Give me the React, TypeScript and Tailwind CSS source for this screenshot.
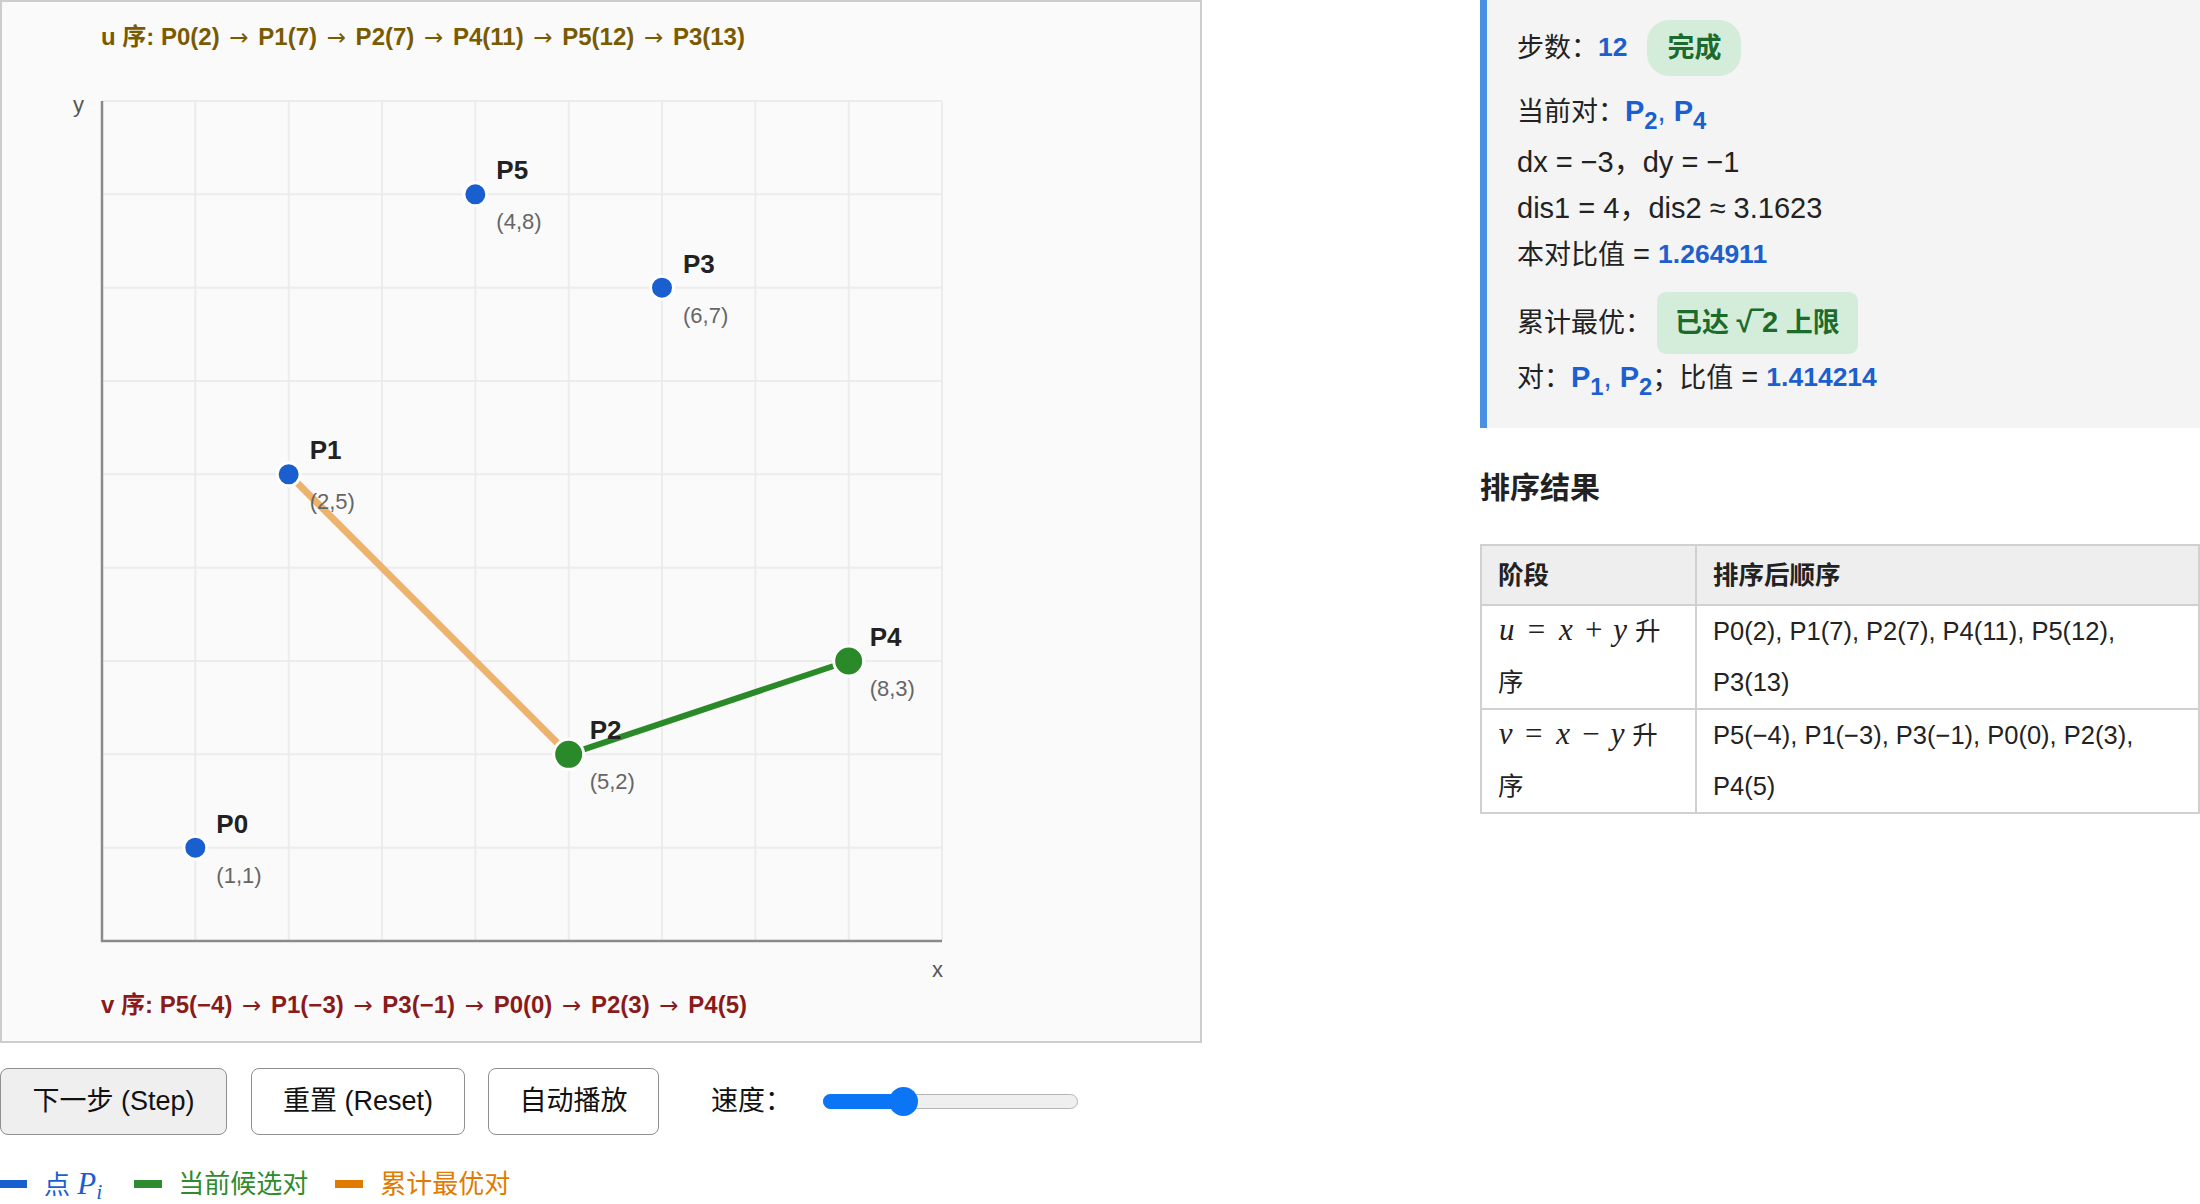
import React from "react";

const X = (v: number) => 102 + 93.333 * v;
const Y = (v: number) => 941 - 93.333 * v;

type Pt = { name: string; x: number; y: number; hi?: boolean };
const pts: Pt[] = [
  { name: "P0", x: 1, y: 1 },
  { name: "P1", x: 2, y: 5 },
  { name: "P2", x: 5, y: 2, hi: true },
  { name: "P3", x: 6, y: 7 },
  { name: "P4", x: 8, y: 3, hi: true },
  { name: "P5", x: 4, y: 8 },
];

const SANS = "'Liberation Sans','Noto Sans CJK SC',sans-serif";

function OrderText({ x, y, fill, head, items }: { x: number; y: number; fill: string; head: string; items: string[] }) {
  return (
    <text x={x} y={y} fontSize={24} fontWeight={700} fill={fill}>
      {head}
      {items.map((it, i) => (
        <React.Fragment key={i}>
          {i > 0 && (
            <tspan dx={3} fontFamily="'DejaVu Sans',sans-serif" fontWeight={400} fontSize={23}>
              →
            </tspan>
          )}
          <tspan dx={i > 0 ? 3 : 0}>{(i > 0 ? " " : "") + it + (i < items.length - 1 ? " " : "")}</tspan>
        </React.Fragment>
      ))}
    </text>
  );
}

function Chart() {
  const ks = [0, 1, 2, 3, 4, 5, 6, 7, 8, 9];
  return (
    <svg width={1198} height={1039} viewBox="2 2 1198 1039" fontFamily={SANS}>
      {ks.map((k) => (
        <line key={"v" + k} x1={X(k)} y1={Y(9)} x2={X(k)} y2={941} stroke="#ececec" strokeWidth={2} />
      ))}
      {ks.map((k) => (
        <line key={"h" + k} x1={102} y1={Y(k)} x2={X(9)} y2={Y(k)} stroke="#ececec" strokeWidth={2} />
      ))}
      <line x1={102} y1={101} x2={102} y2={942} stroke="#8a8a8a" strokeWidth={2.5} />
      <line x1={101} y1={941} x2={942} y2={941} stroke="#8a8a8a" strokeWidth={2.5} />
      <text x={73} y={112} fontSize={22} fill="#555">y</text>
      <text x={932} y={977} fontSize={22} fill="#555">x</text>
      <OrderText
        x={101}
        y={45}
        fill="#7a5a00"
        head="u 序: "
        items={["P0(2)", "P1(7)", "P2(7)", "P4(11)", "P5(12)", "P3(13)"]}
      />
      <OrderText
        x={101}
        y={1013}
        fill="#8b1a1a"
        head="v 序: "
        items={["P5(−4)", "P1(−3)", "P3(−1)", "P0(0)", "P2(3)", "P4(5)"]}
      />
      <line x1={X(2)} y1={Y(5)} x2={X(5)} y2={Y(2)} stroke="#ecb26e" strokeWidth={7} />
      <line x1={X(5)} y1={Y(2)} x2={X(8)} y2={Y(3)} stroke="#2a8a2a" strokeWidth={6} />
      {pts.map((p) => (
        <circle
          key={p.name}
          cx={X(p.x)}
          cy={Y(p.y)}
          r={p.hi ? 15 : 11.5}
          fill={p.hi ? "#2a8a2a" : "#1a5fd0"}
          stroke="#ffffff"
          strokeWidth={3}
        />
      ))}
      {pts.map((p) => (
        <g key={"l" + p.name}>
          <text x={X(p.x) + 21} y={Y(p.y) - 15} fontSize={26} fontWeight={700} fill="#222">
            {p.name}
          </text>
          <text x={X(p.x) + 21} y={Y(p.y) + 35} fontSize={22} fill="#666">
            ({p.x},{p.y})
          </text>
        </g>
      ))}
    </svg>
  );
}

function Num({ children }: { children: React.ReactNode }) {
  return <span className="text-[#1c5fcf] font-bold text-[26.5px]">{children}</span>;
}

function P({ i }: { i: number }) {
  return (
    <span className="text-[#1c5fcf] font-bold text-[29px]">
      P<sub className="text-[0.82em] bottom-[-0.32em]">{i}</sub>
    </span>
  );
}

function G({ w, c, it = true }: { w: string; c: string; it?: boolean }) {
  return (
    <span
      className={
        "inline-block text-center leading-none font-[family-name:'Liberation_Serif',serif] " +
        w +
        (it ? " italic" : "")
      }
    >
      {c}
    </span>
  );
}

function MathExpr({ a, op }: { a: string; op: string }) {
  return (
    <span className="text-[31px] leading-none whitespace-nowrap">
      <G w={a === "u" ? "w-[0.572em]" : "w-[0.485em]"} c={a} />
      <span className="inline-block w-[0.278em]" />
      <G w="w-[0.778em]" c="=" it={false} />
      <span className="inline-block w-[0.278em]" />
      <G w="w-[0.572em]" c="x" />
      <span className="inline-block w-[0.222em]" />
      <G w="w-[0.778em]" c={op} it={false} />
      <span className="inline-block w-[0.222em]" />
      <G w="w-[0.49em]" c="y" />
    </span>
  );
}

export default function App() {
  return (
    <div className="w-[2200px] h-[1204px] bg-white flex text-[#222] font-[family-name:'Liberation_Sans','Noto_Sans_CJK_SC',sans-serif] overflow-hidden">
      <div className="w-[1202px] flex flex-col shrink-0">
        <div className="w-[1202px] h-[1043px] border-2 border-[#cdcdcd] bg-[#fafafa] overflow-hidden">
          <Chart />
        </div>
        <div className="mt-[25px] h-[67px] flex items-center text-[27px] text-[#111]">
          <button className="h-[67px] w-[227px] border-[1.5px] border-[#8f8f8f] rounded-[8px] bg-[#efefef]">
            下一步 (Step)
          </button>
          <button className="ml-[24px] h-[67px] w-[214px] border-[1.5px] border-[#8f8f8f] rounded-[8px] bg-white">
            重置 (Reset)
          </button>
          <button className="ml-[23px] h-[67px] w-[171px] border-[1.5px] border-[#8f8f8f] rounded-[8px] bg-white">
            自动播放
          </button>
          <span className="ml-[52px]">速度：</span>
          <div className="ml-[31px] relative w-[255px] h-[15px] rounded-full bg-[#efefef] border border-[#b5b5b5]">
            <div className="absolute left-[-1px] top-[-1px] h-[15px] w-[82px] rounded-full bg-[#0b75f5]" />
            <div className="absolute left-[65px] top-[-8px] w-[29px] h-[29px] rounded-full bg-[#0b75f5]" />
          </div>
        </div>
        <div className="mt-[32px] h-[34px] flex items-center text-[26px]">
          <span className="w-[27px] h-[8px] bg-[#1a5fd0]" />
          <span className="ml-[17px] text-[#1a5fd0] whitespace-nowrap">
            点{" "}
            <span className="font-[family-name:'Liberation_Serif',serif] italic text-[31px]">
              P<sub className="text-[0.7em]">i</sub>
            </span>
          </span>
          <span className="ml-[32px] w-[28px] h-[8px] bg-[#2e8b2e]" />
          <span className="ml-[16px] text-[#2e8b2e]">当前候选对</span>
          <span className="ml-[27px] w-[28px] h-[8px] bg-[#e07b00]" />
          <span className="ml-[17px] text-[#e07b00]">累计最优对</span>
        </div>
      </div>

      <div className="ml-[278px] w-[720px] flex flex-col shrink-0">
        <div className="h-[428px] bg-[#f4f4f4] border-l-[7px] border-[#4a90e2] pl-[30px] pt-[20px] text-[27px] text-[#222]">
          <div className="h-[56px] flex items-center">
            步数：<Num>12</Num>
            <span className="ml-[20px] h-[56px] px-[20px] rounded-[22px] bg-[#d4edda] text-[#1d6b2c] font-bold flex items-center">
              完成
            </span>
          </div>
          <div className="mt-[13px] h-[46px] flex items-center">
            当前对：<P i={2} />
            <span className="text-[#1c5fcf] text-[29px]">,&nbsp;</span>
            <P i={4} />
          </div>
          <div className="mt-[5px] h-[46px] flex items-center text-[29px]">dx = −3，dy = −1</div>
          <div className="h-[46px] flex items-center text-[29px]">dis1 = 4，dis2 ≈ 3.1623</div>
          <div className="h-[46px] flex items-center">
            本对比值<span className="text-[29px]">&nbsp;=&nbsp;</span>
            <Num>1.264911</Num>
          </div>
          <div className="mt-[15px] h-[60px] flex items-center">
            累计最优：
            <span className="ml-[5px] h-[62px] px-[18px] rounded-[9px] bg-[#d4edda] text-[#1d6b2c] font-bold flex items-center whitespace-nowrap">
              已达&nbsp;<span className="text-[29px]">√‾2</span>&nbsp;上限
            </span>
          </div>
          <div className="mt-[2px] h-[46px] flex items-center">
            对：<P i={1} />
            <span className="text-[#1c5fcf] text-[29px]">,&nbsp;</span>
            <P i={2} />；比值<span className="text-[29px]">&nbsp;=&nbsp;</span>
            <Num>1.414214</Num>
          </div>
        </div>

        <div className="mt-[39px] h-[40px] flex items-center text-[30px] font-bold text-[#222]">排序结果</div>

        <table className="mt-[37px] w-[720px] table-fixed border-collapse text-[25.5px] text-[#222]">
          <colgroup>
            <col className="w-[215px]" />
            <col />
          </colgroup>
          <thead>
            <tr className="bg-[#eeeeee]">
              <th className="border-2 border-[#d0d0d0] px-[16px] py-0 leading-[58px] text-left font-bold">阶段</th>
              <th className="border-2 border-[#d0d0d0] px-[16px] py-0 leading-[58px] text-left font-bold">排序后顺序</th>
            </tr>
          </thead>
          <tbody>
            <tr>
              <td className="border-2 border-[#d0d0d0] px-[16px] py-0 leading-[51px] align-top whitespace-nowrap">
                <MathExpr a="u" op="+" /> 升
                <br />序
              </td>
              <td className="border-2 border-[#d0d0d0] px-[16px] py-0 leading-[51px] align-top whitespace-nowrap">
                P0(2), P1(7), P2(7), P4(11), P5(12),
                <br />
                P3(13)
              </td>
            </tr>
            <tr>
              <td className="border-2 border-[#d0d0d0] px-[16px] py-0 leading-[51px] align-top whitespace-nowrap">
                <MathExpr a="v" op="−" /> 升
                <br />序
              </td>
              <td className="border-2 border-[#d0d0d0] px-[16px] py-0 leading-[51px] align-top whitespace-nowrap">
                P5(−4), P1(−3), P3(−1), P0(0), P2(3),
                <br />
                P4(5)
              </td>
            </tr>
          </tbody>
        </table>
      </div>
    </div>
  );
}
